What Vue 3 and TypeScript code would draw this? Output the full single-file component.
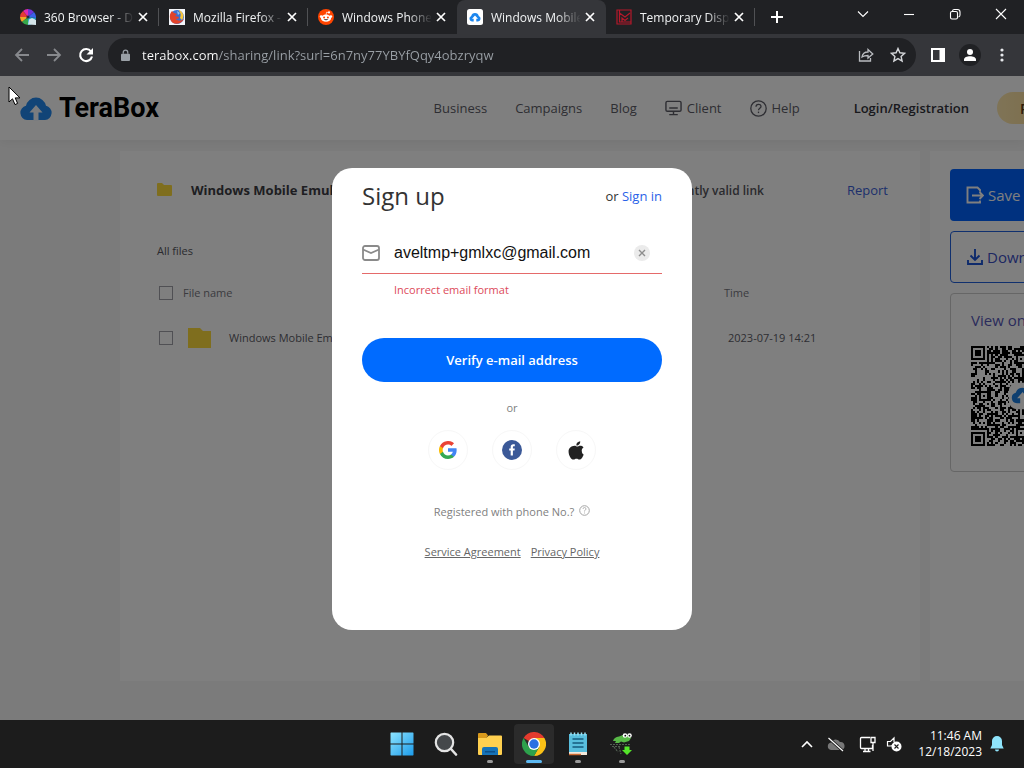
<script setup lang="ts">
import { ref } from 'vue'

interface Tab {
  title: string
  icon: string
  active?: boolean
}

const tabs: Tab[] = [
  { title: '360 Browser - D', icon: 'pinwheel' },
  { title: 'Mozilla Firefox -', icon: 'firefox' },
  { title: 'Windows Phone', icon: 'reddit' },
  { title: 'Windows Mobile', icon: 'terabox', active: true },
  { title: 'Temporary Disp', icon: 'mail' },
]

const url = ref('terabox.com/sharing/link?surl=6n7ny77YBYfQqy4obzryqw')
const email = ref('aveltmp+gmlxc@gmail.com')

const files = [{ name: 'Windows Mobile Emulators', time: '2023-07-19 14:21' }]

const size = 49

function finder(x: number, y: number, left: number, top: number): boolean | null {
  const dx = x - left
  const dy = y - top
  if (dx < -1 || dy < -1 || dx > 7 || dy > 7) return null
  const d = Math.max(Math.abs(dx - 3), Math.abs(dy - 3))
  return d !== 2 && d !== 4
}

function buildCode(): string {
  let seed = 20231
  let path = ''
  const marks = [6, 24, 42]
  for (let y = 0; y < size; y++) {
    for (let x = 0; x < size; x++) {
      seed = (seed * 1103515245 + 12345) % 2147483648
      let dark = (seed >> 16) % 100 < 51
      for (const my of marks) {
        for (const mx of marks) {
          const d = Math.max(Math.abs(x - mx), Math.abs(y - my))
          if (d < 3) dark = d !== 1
        }
      }
      const found = finder(x, y, 0, 0) ?? finder(x, y, size - 7, 0) ?? finder(x, y, 0, size - 7)
      if (found !== null) dark = found
      if (dark) path += `M${x} ${y}h1v1h-1z`
    }
  }
  return path
}

const codePath = buildCode()
</script>

<template>
  <div class="desktop">
    <div class="tabstrip">
      <div class="tabs" role="tablist">
        <div v-for="tab in tabs" :key="tab.title" class="tab" :class="{ active: tab.active }" role="tab">
          <svg v-if="tab.icon === 'pinwheel'" class="favicon" viewBox="0 0 16 16">
            <path d="M8 8V0a8 8 0 0 1 6 3z" fill="#6f35d8" />
            <path d="M8 8l6-5a8 8 0 0 1 2 6z" fill="#3a62e8" />
            <path d="M8 8L3 2a8 8 0 0 1 5-2z" fill="#e02ab0" />
            <path d="M8 8L0 8a8 8 0 0 1 3-6z" fill="#e53a35" />
            <path d="M8 8L2 13a8 8 0 0 1-2-5z" fill="#f2a826" />
            <path d="M8 8v8a8 8 0 0 1-6-3z" fill="#35a84a" />
            <path d="M8 8l8 1a8 8 0 0 1-8 7z" fill="#1ba4c9" />
            <circle cx="8" cy="8" r="1.6" fill="#2b2b3c" />
            <path d="M8 15.5l1-5 3-1.5 4 2v5z" fill="#d4e4e8" />
          </svg>
          <svg v-else-if="tab.icon === 'firefox'" class="favicon" viewBox="0 0 16 16">
            <path d="M0 0h16v16H0z" fill="#f3f5fa" />
            <circle cx="8" cy="8" r="7" fill="#3b6fd0" />
            <path d="M3 2C0 5 0 11 4 14c4 2 9 0 11-4-3 2-6 2-8 0 2 0 3-1 3-2L6 7l2-2-3-1z" fill="#e2432a" />
            <path d="M10 2c2 2 2 4 1 7l2 2c3-4 1-8-3-10z" fill="#f7c53b" />
            <path d="M8 2l3 2-2 2z" fill="#8fc4f0" />
          </svg>
          <svg v-else-if="tab.icon === 'reddit'" class="favicon" viewBox="0 0 16 16">
            <circle cx="8" cy="8" r="8" fill="#ff4500" />
            <ellipse cx="8" cy="9.2" rx="5" ry="3.6" fill="#fff" />
            <circle cx="3.2" cy="7.6" r="1.4" fill="#fff" />
            <circle cx="12.8" cy="7.6" r="1.4" fill="#fff" />
            <circle cx="11" cy="3.4" r="1.1" fill="#fff" />
            <path d="M8 6l.6-2.8 2.4.5" fill="none" stroke="#fff" stroke-width=".7" />
            <circle cx="6.1" cy="8.4" r="1" fill="#ff4500" />
            <circle cx="9.9" cy="8.4" r="1" fill="#ff4500" />
            <path d="M5.6 10.3q2.4 2 4.8 0z" fill="#222" />
          </svg>
          <svg v-else-if="tab.icon === 'terabox'" class="favicon" viewBox="0 0 16 16">
            <rect width="16" height="16" rx="2.5" fill="#fff" />
            <path d="M5 12.5a2.8 2.8 0 0 1-.8-5.4 3.9 3.9 0 0 1 7.6 0 2.8 2.8 0 0 1-.8 5.4H9.3V9.8H11L8 6.6 5 9.8h1.7v2.7z" fill="#1c86ee" />
          </svg>
          <svg v-else class="favicon" viewBox="0 0 16 16" fill="none" stroke="#b5182a">
            <path d="M1 1h14v14H1z" stroke-width="1.2" />
            <path d="M3.5 1v12H15M3.5 4L9 8l5-4M6 13V9l3 2.5L12 9" stroke-width="1.2" />
          </svg>
          <span class="tab-title">{{ tab.title }}</span>
          <button class="tab-close" aria-label="Close tab">
            <svg width="10" height="10" viewBox="0 0 10 10"><path d="M1 1l8 8M9 1L1 9" stroke="#fff" stroke-width="1.7" /></svg>
          </button>
        </div>
      </div>
      <button class="new-tab" aria-label="New tab">
        <svg width="14" height="14" viewBox="0 0 14 14"><path d="M7 1v12M1 7h12" stroke="#fff" stroke-width="2" /></svg>
      </button>
      <div class="window-controls">
        <button aria-label="Search tabs"><svg viewBox="0 0 12 12"><path d="M1 3.5l5 5 5-5" /></svg></button>
        <button aria-label="Minimize"><svg viewBox="0 0 12 12"><path d="M1 6.5h10" /></svg></button>
        <button aria-label="Restore">
          <svg viewBox="0 0 12 12"><rect x="1.5" y="3.5" width="7" height="7.5" rx="1.5" /><path d="M3.5 3.2V3q.2-1.5 1.8-1.5h3.2q2.5 0 2.5 2.5v3q0 1.5-1.5 2" /></svg>
        </button>
        <button aria-label="Close window"><svg viewBox="0 0 12 12"><path d="M1 1l10 10M11 1L1 11" /></svg></button>
      </div>
    </div>

    <div class="toolbar">
      <button class="tool" aria-label="Back">
        <svg width="16" height="16" viewBox="0 0 16 16" fill="none" stroke="#87898d" stroke-width="1.8"><path d="M15 8H2M8 2L2 8l6 6" /></svg>
      </button>
      <button class="tool" aria-label="Forward">
        <svg width="16" height="16" viewBox="0 0 16 16" fill="none" stroke="#87898d" stroke-width="1.8"><path d="M1 8h13M8 2l6 6-6 6" /></svg>
      </button>
      <button class="tool" aria-label="Reload">
        <svg width="16" height="16" viewBox="0 0 16 16"><path d="M13 4.5A6 6 0 1 0 14 9.5" fill="none" stroke="#fff" stroke-width="2.1" /><path d="M15 1v6.5H8.5z" fill="#fff" /></svg>
      </button>
      <div class="address">
        <svg class="lock" width="9" height="13" viewBox="0 0 10 14"><rect y="5" width="10" height="8" rx="1" fill="#9aa0a6" /><path d="M2.5 5V3.5a2.5 2.5 0 0 1 5 0V5" fill="none" stroke="#9aa0a6" stroke-width="1.4" /></svg>
        <input v-model="url" class="url" type="text" aria-label="Address" spellcheck="false" />
        <button class="tool" aria-label="Share">
          <svg width="16" height="16" viewBox="0 0 16 16" fill="none" stroke="#b9bcc0" stroke-width="1.3"><path d="M1.5 4v10h11v-3M4 10c.5-3.5 2.5-5 6-5V2.5L14.8 7 10 11V8.5C7 8.5 5.5 9 4 10z" /></svg>
        </button>
        <button class="tool" aria-label="Bookmark">
          <svg width="16" height="16" viewBox="0 0 16 16" fill="none" stroke="#d5d7da" stroke-width="1.4"><path d="M8 1.5l1.9 4.3 4.7.5-3.5 3.1 1 4.6L8 11.6 3.9 14l1-4.6L1.4 6.3l4.7-.5z" /></svg>
        </button>
      </div>
      <button class="tool" aria-label="Side panel">
        <svg width="14" height="14" viewBox="0 0 14 14"><path d="M1 1h12v12H1z" fill="none" stroke="#fff" stroke-width="2" /><path d="M8.5 1H13v12H8.5z" fill="#fff" /></svg>
      </button>
      <button class="tool" aria-label="Profile">
        <svg width="22" height="22" viewBox="0 0 22 22"><circle cx="11" cy="11" r="11" fill="#202124" /><circle cx="11" cy="8" r="3" fill="#fff" /><path d="M5 17v-1.5c0-4.5 12-4.5 12 0V17z" fill="#fff" /></svg>
      </button>
      <button class="tool" aria-label="Menu">
        <svg width="4" height="14" viewBox="0 0 4 14" fill="#e8eaed"><circle cx="2" cy="2" r="1.6" /><circle cx="2" cy="7" r="1.6" /><circle cx="2" cy="12" r="1.6" /></svg>
      </button>
    </div>

    <main class="page">
      <header class="site-header">
        <a class="brand" href="#">
          <svg width="32" height="26" viewBox="0 0 32 26"><path d="M7 25a7.2 7.2 0 0 1-1-14.2 10.2 10.2 0 0 1 20 0A7.2 7.2 0 0 1 25 25z" fill="#2389ee" /><path d="M16 10l-6.500 7.500h4V26h5v-8.500h4z" fill="#f4f9ff" /></svg>
          <span>TeraBox</span>
        </a>
        <nav class="site-nav">
          <a href="#">Business</a>
          <a href="#">Campaigns</a>
          <a href="#">Blog</a>
          <a href="#" class="with-icon">
            <svg width="17" height="16" viewBox="0 0 18 16" fill="none" stroke="#5c5c66" stroke-width="1.5"><rect x="1" y="1" width="16" height="10.5" rx="1.5" /><path d="M4.5 8h9M9 12v3M4.5 15h9" /></svg>
            Client
          </a>
          <a href="#" class="with-icon">
            <svg width="17" height="17" viewBox="0 0 17 17" fill="none" stroke="#5c5c66" stroke-width="1.3"><circle cx="8.5" cy="8.5" r="7.7" /><path d="M6 6.8c0-3.3 5-3.3 5-.3 0 1.8-2.5 1.8-2.5 3.8" /><path d="M8.5 11.6v1.5" /></svg>
            Help
          </a>
          <a href="#" class="login">Login/Registration</a>
          <button class="premium">Premium</button>
        </nav>
      </header>

      <div class="content">
        <section class="card">
          <div class="card-head">
            <svg width="15" height="14" viewBox="0 0 15 14"><path d="M0 1q0-1 1-1h4l2 2h7q1 0 1 1v9q0 1-1 1H1q-1 0-1-1z" fill="#ffdc3d" /></svg>
            <h2>Windows Mobile Emulators</h2>
            <strong>Permanently valid link</strong>
            <a href="#" class="report">Report</a>
          </div>
          <p class="crumb">All files</p>
          <table class="files">
            <thead>
              <tr>
                <th class="name">
                  <label><input type="checkbox" /><span>File name</span></label>
                </th>
                <th class="time">Time</th>
              </tr>
            </thead>
            <tbody>
              <tr v-for="file in files" :key="file.name">
                <td class="name">
                  <label>
                    <input type="checkbox" />
                    <svg width="23" height="20" viewBox="0 0 23 20"><path d="M0 0h12l3 3h8v17H0z" fill="#ffdc3d" /></svg>
                    <span>{{ file.name }}</span>
                  </label>
                </td>
                <td class="time">{{ file.time }}</td>
              </tr>
            </tbody>
          </table>
        </section>

        <aside class="side">
          <button class="side-btn primary">
            <svg width="18" height="18" viewBox="0 0 18 18" fill="none" stroke="#fff" stroke-width="1.9"><path d="M14 5.5V4l-2.5-2.5H1.5v15H14v-2M6 9.5h11M13.5 6l3.5 3.5-3.5 3.5" /></svg>
            Save to TeraBox
          </button>
          <button class="side-btn outline">
            <svg width="16" height="16" viewBox="0 0 16 16" fill="none" stroke="#1c55d8" stroke-width="1.9"><path d="M8 0v11M3.5 6.5L8 11l4.5-4.5M1 11v4h14v-4" /></svg>
            Download
          </button>
          <div class="scan">
            <p>View on phone</p>
            <svg class="code" width="100" height="100" :viewBox="`0 0 ${size} ${size}`">
              <path :d="codePath" fill="#000" shape-rendering="crispEdges" />
              <rect x="18.5" y="18" width="13" height="13" rx="4" fill="#fff" />
              <path d="M22.5 28a2.6 2.6 0 0 1-.6-5.1 3.6 3.6 0 0 1 6.8 0 2.6 2.6 0 0 1-.6 5.1h-1.6v-2.4H28l-2.7-3-2.7 3h1.5V28z" fill="#1d7fe0" />
            </svg>
          </div>
        </aside>
      </div>

      <div class="overlay">
        <form class="modal" @submit.prevent>
          <div class="modal-head">
            <h1>Sign up</h1>
            <span>or <a href="#">Sign in</a></span>
          </div>
          <div class="field">
            <svg width="18" height="16" viewBox="0 0 18 16" fill="none" stroke="#8a8a8a" stroke-width="1.8"><rect x="1" y="1" width="16" height="14" rx="2" /><path d="M1 4.5l8 3.5 8-3.5" /></svg>
            <input v-model="email" type="text" aria-label="Email" spellcheck="false" />
            <button type="button" class="clear" aria-label="Clear">
              <svg width="16" height="16" viewBox="0 0 16 16"><circle cx="8" cy="8" r="8" fill="#ebebeb" /><path d="M5 5l6 6M11 5l-6 6" stroke="#8e8e8e" stroke-width="1.4" /></svg>
            </button>
          </div>
          <p class="error">Incorrect email format</p>
          <button class="verify" type="submit">Verify e-mail address</button>
          <p class="or">or</p>
          <div class="socials">
            <button type="button" aria-label="Google">
              <svg width="18" height="18" viewBox="0 0 18 18"><path d="M17.64 9.2c0-.64-.06-1.25-.16-1.84H9v3.48h4.84a4.14 4.14 0 0 1-1.8 2.72v2.26h2.92c1.7-1.57 2.68-3.88 2.68-6.62z" fill="#4285f4" /><path d="M9 18c2.43 0 4.47-.8 5.96-2.18l-2.92-2.26c-.8.54-1.84.86-3.04.86-2.34 0-4.33-1.58-5.04-3.71H.96v2.33A9 9 0 0 0 9 18z" fill="#34a853" /><path d="M3.96 10.71a5.4 5.4 0 0 1 0-3.42V4.96H.96a9 9 0 0 0 0 8.08z" fill="#fbbc05" /><path d="M9 3.58c1.32 0 2.51.45 3.44 1.35l2.58-2.59A9 9 0 0 0 .96 4.96l3 2.33C4.67 5.16 6.66 3.58 9 3.58z" fill="#ea4335" /></svg>
            </button>
            <button type="button" aria-label="Facebook">
              <svg width="20" height="20" viewBox="0 0 20 20"><circle cx="10" cy="10" r="10" fill="#3b5998" /><path d="M8.7 15.5v-5H7.2V8.4h1.5V7c0-1.800 1-2.700 2.600-2.700h1.500v2h-1c-.7 0-.9.3-.9.9v1.2h1.9l-.3 2.1h-1.6v5z" fill="#fff" /></svg>
            </button>
            <button type="button" aria-label="Apple">
              <svg width="18" height="20" viewBox="0 0 18 21" fill="#222"><path d="M15 11.1c0-2.2 1.8-3.2 1.900-3.300-1-1.500-2.600-1.700-3.200-1.700-1.400-.1-2.700.8-3.300.8-.7 0-1.700-.8-2.900-.8C3.900 6.200 1.200 8.600 1.200 12c0 4.100 2.700 8.600 5.100 8.600 1.200 0 1.700-.8 3.200-.8s1.900.8 3.200.8c2.200 0 3.800-3.600 4.300-5.300-.1 0-2-1-2-4.200z" /><path d="M12.400 4.400c.7-.8 1.200-2 1-3.200-1 .1-2.200.7-2.900 1.500-.7.8-1.200 1.900-1.100 3.100 1.200.1 2.300-.6 3-1.400z" /></svg>
            </button>
          </div>
          <p class="phone">
            Registered with phone No.?
            <svg width="11" height="11" viewBox="0 0 11 11" fill="none" stroke="#a5a5a5"><circle cx="5.5" cy="5.5" r="4.8" /><path d="M4 4q0-1.5 1.5-1.5T7 4q0 1-1.5 1.7v.8M5.5 7.5v1" stroke-width=".8" /></svg>
          </p>
          <p class="legal"><a href="#">Service Agreement</a><a href="#">Privacy Policy</a></p>
        </form>
      </div>

      <svg class="pointer" width="13" height="20" viewBox="0 0 13 20"><path d="M1 1v15l3.5-3.2L7 18.6l2.6-1.2L7.2 11.9H12z" fill="#fff" stroke="#000" /></svg>
    </main>

    <footer class="taskbar">
      <div class="apps">
        <button aria-label="Start">
          <svg width="24" height="24" viewBox="0 0 24 24"><defs><linearGradient id="start" x1="0" y1="0" x2="1" y2="1"><stop offset="0" stop-color="#8de4ff" /><stop offset="1" stop-color="#1c9bea" /></linearGradient></defs><path d="M1 .5h10.500V11.500H.5V1zM12.500.5H23l.5.5v10.500h-11zM.5 12.500h11v11H1l-.5-.5zM12.500 12.500h11V23l-.5.5H12.500z" fill="url(#start)" /></svg>
        </button>
        <button aria-label="Search">
          <svg width="24" height="24" viewBox="0 0 24 24"><circle cx="10.5" cy="10.5" r="8.7" fill="#45484b" stroke="#e4e4e4" stroke-width="2.2" /><path d="M17 17l5 5.5" stroke="#e4e4e4" stroke-width="2.6" stroke-linecap="round" /></svg>
        </button>
        <button aria-label="Files" class="running">
          <svg width="24" height="24" viewBox="0 0 24 24"><path d="M0 2q0-1 1-1h7l2 2.5-2 3H0z" fill="#d99a1c" /><path d="M0 6h8l3-2.5h12q1 0 1 1V22q0 1-1 1H1q-1 0-1-1z" fill="#ffd04f" /><path d="M4 23v-6q0-2 2-2h12q2 0 2 2v6z" fill="#1673b8" /><path d="M7 19h10v1.5H7z" fill="#0d5089" /></svg>
        </button>
        <button aria-label="Chrome" class="running current">
          <svg width="24" height="24" viewBox="0 0 24 24"><path d="M12 12L1.6 6A12 12 0 0 1 22.4 6z" fill="#e33b2e" /><path d="M12 6h10.4A12 12 0 0 1 12 24l5.2-9z" fill="#fbc116" /><path d="M6.8 15L1.6 6A12 12 0 0 0 12 24l5.2-9z" fill="#2da24c" /><circle cx="12" cy="12" r="6" fill="#fff" /><circle cx="12" cy="12" r="4.7" fill="#2c70e2" /></svg>
        </button>
        <button aria-label="Notepad" class="running">
          <svg width="20" height="24" viewBox="0 0 20 24"><path d="M1 2h18v19H1z" fill="#58bedd" /><path d="M1 20h18v2.5q0 .5-.5.5h-17q-.5 0-.5-.5z" fill="#f3e9dc" /><path d="M1 22.5h12" stroke="#cf6b32" stroke-width="1.5" /><path d="M4.5 7h11M4.5 11h11M4.5 15h11" stroke="#145b7e" stroke-width="1.7" /><path d="M3 .5v3M6.5.5v3M10 .5v3M13.5.5v3M17 .5v3" stroke="#9de2f5" stroke-width="1.5" /></svg>
        </button>
        <button aria-label="Downloader" class="running">
          <svg width="24" height="24" viewBox="0 0 24 24"><path d="M3 9q1-4 6-4.500l4-1.500h6l2 3-2 3-5 1.500-3-1-2 1.500H5l1-2z" fill="#58b947" /><circle cx="15" cy="3.5" r="2.3" fill="#fff" /><circle cx="19.5" cy="3.5" r="2.3" fill="#fff" /><circle cx="15.3" cy="3.7" r=".9" fill="#111" /><circle cx="19.5" cy="3.7" r=".9" fill="#111" /><path d="M0 12.5h21M2 14.5h9M4 15l4 5M9 15l2 7" stroke="#526052" stroke-width="1.2" stroke-dasharray="2 1" /><path d="M14.5 14.5h5v3.5h2.5l-5 5-5-5h2.5z" fill="#55e52a" /></svg>
        </button>
      </div>
      <div class="tray">
        <button aria-label="Hidden icons"><svg width="12" height="8" viewBox="0 0 12 8" fill="none" stroke="#fff" stroke-width="1.6"><path d="M1 7l5-5 5 5" /></svg></button>
        <button aria-label="Cloud storage"><svg width="18" height="15" viewBox="0 0 18 15"><path d="M4 13a3.8 3.8 0 0 1 0-7.5 5 5 0 0 1 9-.5 4 4 0 0 1 1 8z" fill="#777" /><path d="M1.5 1l14.5 13" stroke="#1c1c1c" stroke-width="3" /><path d="M1.5 1l14.5 13" stroke="#fff" stroke-width="1.2" /></svg></button>
        <button aria-label="Network"><svg width="18" height="17" viewBox="0 0 18 17" fill="none" stroke="#fff" stroke-width="1.3"><path d="M11 1.5H2.5q-1 0-1 1v9q0 1 1 1h11V9M12 1.5h4v5h-4zM14 6.5V15M4 15.5h7.5M6 12.5v3M9.5 12.5v3" /></svg></button>
        <button aria-label="Volume"><svg width="16" height="16" viewBox="0 0 16 16"><path d="M7 9.5L4.5 10H1.5V5.5h3L8 2v4" fill="none" stroke="#fff" stroke-width="1.2" /><circle cx="10.5" cy="10.5" r="5" fill="#fff" /><path d="M8.5 8.5l4 4M12.5 8.5l-4 4" stroke="#1c1c1c" stroke-width="1.1" /></svg></button>
        <div class="clock"><span>11:46 AM</span><span>12/18/2023</span></div>
        <button aria-label="Notifications"><svg width="14" height="16" viewBox="0 0 14 16" fill="#8fe4fb"><path d="M7 0a5 5 0 0 0-5 5v4L.3 12.5h13.4L12 9V5a5 5 0 0 0-5-5zM5 13.5h4a2 2 0 0 1-4 0z" /></svg></button>
      </div>
    </footer>
  </div>
</template>

<style>
body {
  margin: 0;
}
</style>

<style scoped>
.desktop {
  display: flex;
  flex-direction: column;
  height: 100vh;
  overflow: hidden;
  font-family: 'Open Sans', 'Noto Sans', sans-serif;
  font-size: 11px;
}

.desktop * {
  box-sizing: border-box;
}

button {
  display: flex;
  align-items: center;
  justify-content: center;
  flex: none;
  margin: 0;
  padding: 0;
  border: 0;
  background: none;
  font-family: inherit;
}

svg {
  flex: none;
}

a {
  color: inherit;
  text-decoration: none;
}

p,
h1,
h2 {
  margin: 0;
}

input {
  outline: 0;
}

.tabstrip {
  display: flex;
  flex: none;
  height: 34px;
  padding-left: 10px;
  background: #202124;
}

.tabs {
  display: flex;
  min-width: 0;
}

.tab {
  display: flex;
  align-items: center;
  width: 149px;
  padding: 0 10px;
  color: #f1f3f4;
  font-size: 12px;
  background: linear-gradient(#505154, #505154) right center / 1px 18px no-repeat;
}

.tab:has(+ .active) {
  background: none;
}

.tab.active {
  border-radius: 8px 8px 0 0;
  background: #35363a;
}

.favicon {
  width: 16px;
  height: 16px;
}

.tab-title {
  flex: 1;
  min-width: 0;
  margin: 0 4px 0 8px;
  white-space: nowrap;
  mask-image: linear-gradient(90deg, #000 66px, transparent 90px);
}

.tab-close {
  width: 12px;
  height: 16px;
}

.new-tab {
  width: 28px;
  margin-left: 8px;
}

.window-controls {
  display: flex;
  height: 28px;
  margin-left: auto;
}

.window-controls button {
  width: 46px;
}

.window-controls svg {
  width: 12px;
  height: 12px;
  fill: none;
  stroke: #fff;
  stroke-width: 1.1;
}

.toolbar {
  display: flex;
  align-items: center;
  flex: none;
  height: 42px;
  padding: 0 6px;
  background: #35363a;
}

.tool {
  width: 32px;
  height: 32px;
}

.address {
  display: flex;
  align-items: center;
  flex: 1;
  height: 34px;
  margin: 0 6px;
  padding: 0 2px 0 13px;
  border-radius: 17px;
  background: #202124;
}

.url {
  flex: 1;
  min-width: 0;
  margin-left: 12px;
  padding: 0;
  border: 0;
  color: transparent;
  background: linear-gradient(90deg, #fff 76px, #9aa0a6 76px);
  background-clip: text;
  font: 13px 'Open Sans', sans-serif;
}

.page {
  position: relative;
  flex: 1;
  min-height: 0;
  overflow: hidden;
  background: #f7f7f7;
}

.site-header {
  display: flex;
  align-items: center;
  height: 64px;
  padding-left: 20px;
  background: #fff;
  box-shadow: 0 2px 10px rgba(0, 0, 0, 0.06);
}

.brand {
  display: flex;
  align-items: center;
  gap: 7px;
  color: #000;
  font: 700 27px Roboto, sans-serif;
}

.site-nav {
  display: flex;
  align-items: center;
  margin-left: auto;
  gap: 28px;
  color: #5c5c66;
  font-size: 13px;
  white-space: nowrap;
}

.with-icon {
  display: flex;
  align-items: center;
  gap: 5px;
}

.login {
  margin-left: 26px;
  color: #33333a;
  font-weight: 600;
}

.premium {
  width: 108px;
  height: 32px;
  margin-right: -81px;
  border-radius: 16px;
  background: linear-gradient(90deg, #ffe8ae, #f2cc79);
  color: #5a3a10;
  font-size: 14px;
  font-weight: 600;
}

.content {
  display: flex;
  gap: 10px;
  height: 530px;
  margin: 11px 0 0 120px;
}

.card {
  flex: 1;
  min-width: 0;
  padding: 29px 32px 0 37px;
  background: #fff;
}

.card-head {
  display: flex;
  align-items: center;
  height: 20px;
}

.card-head h2 {
  margin-left: 19px;
  color: #3c3c44;
  font-size: 13px;
  font-weight: 700;
}

.card-head strong {
  margin-left: auto;
  color: #55555c;
  font-size: 12px;
  font-weight: 600;
}

.report {
  margin-left: 83px;
  color: #3a5fd9;
  font-size: 13px;
}

.crumb {
  margin-top: 41px;
  color: #55555c;
  line-height: 20px;
}

.files {
  width: 100%;
  margin-top: 9px;
  border-collapse: collapse;
  table-layout: fixed;
}

.files th,
.files td {
  height: 45px;
  padding: 0;
  text-align: left;
  font-weight: 400;
  color: #5c5c66;
}

.files th {
  color: #77777f;
}

.files .time {
  width: 164px;
}

.files td.time {
  padding-left: 4px;
}

.files label {
  display: flex;
  align-items: center;
}

.files input {
  appearance: none;
  width: 14px;
  height: 14px;
  margin: 0 10px 0 2px;
  border: 1px solid #a0a0a8;
}

.files td input {
  margin-right: 15px;
}

.files td span {
  margin-left: 18px;
}

.side {
  flex: 0 0 94px;
  min-width: 0;
  padding: 18px 0 0 20px;
  background: #fff;
}

.side-btn {
  justify-content: flex-start;
  gap: 4px;
  width: 240px;
  height: 52px;
  padding-left: 16px;
  border-radius: 4px;
  font-size: 15px;
}

.primary {
  background: #0062ff;
  color: #fff;
}

.outline {
  margin-top: 10px;
  border: 1px solid #2060dd;
  color: #3c4fc5;
}

.scan {
  width: 240px;
  height: 179px;
  margin-top: 10px;
  padding: 16px 20px;
  border: 1px solid #ccc;
  border-radius: 4px;
  color: #5557b8;
  font-size: 15px;
  line-height: 20px;
}

.code {
  display: block;
  margin-top: 16px;
}

.overlay {
  position: absolute;
  inset: 0;
  display: flex;
  align-items: center;
  justify-content: center;
  padding-top: 2px;
  background: rgba(0, 0, 0, 0.5);
}

.modal {
  width: 360px;
  padding: 12px 30px 68px;
  border-radius: 20px;
  background: #fff;
  text-align: center;
  line-height: 20px;
}

.modal-head {
  display: flex;
  align-items: center;
  justify-content: space-between;
  height: 32px;
  color: #333;
  font-size: 13px;
}

.modal-head h1 {
  font-size: 24px;
  font-weight: 500;
}

.modal-head a {
  color: #2a62e8;
}

.field {
  display: flex;
  align-items: center;
  height: 42px;
  margin-top: 20px;
  padding-right: 12px;
  border-bottom: 1px solid #e56a6a;
}

.field input {
  flex: 1;
  min-width: 0;
  margin-left: 14px;
  padding: 0;
  border: 0;
  background: none;
  color: #111;
  font: 16px 'Liberation Sans', sans-serif;
}

.error {
  margin: 6px 0 0 32px;
  color: #dd4a5a;
  text-align: left;
}

.verify {
  width: 100%;
  height: 44px;
  margin-top: 38px;
  border-radius: 22px;
  background: #006bff;
  color: #fff;
  font-size: 13px;
  font-weight: 600;
}

.or {
  margin-top: 16px;
  color: #808080;
}

.socials {
  display: flex;
  justify-content: center;
  gap: 24px;
  margin-top: 12px;
}

.socials button {
  width: 40px;
  height: 40px;
  border: 1px solid #f7f7f7;
  border-radius: 50%;
}

.phone {
  display: flex;
  justify-content: center;
  gap: 5px;
  margin-top: 32px;
  color: #808080;
}

.phone svg {
  margin-top: 3px;
}

.legal {
  display: flex;
  justify-content: center;
  gap: 10px;
  margin-top: 20px;
  color: #666;
}

.legal a {
  text-decoration: underline;
}

.pointer {
  position: absolute;
  top: 10px;
  left: 8px;
}

.taskbar {
  display: grid;
  grid-template-columns: 1fr auto 1fr;
  flex: none;
  height: 48px;
  background: #1c1c1c;
}

.apps {
  display: flex;
  grid-column: 2;
  align-items: center;
  gap: 4px;
}

.apps button {
  position: relative;
  width: 40px;
  height: 40px;
  border-radius: 4px;
}

.running::after {
  position: absolute;
  bottom: 1px;
  width: 6px;
  height: 3px;
  border-radius: 2px;
  background: #9a9a9a;
  content: '';
}

.current {
  background: #2b2b2b;
}

.current::after {
  width: 16px;
  background: #5db9f2;
}

.tray {
  display: flex;
  align-items: center;
  justify-content: flex-end;
  padding-right: 20px;
}

.tray button {
  height: 32px;
}

.tray > button + button {
  margin-left: 14px;
}

.tray > button:nth-of-type(4) {
  margin-left: 9px;
}

.clock {
  display: flex;
  flex-direction: column;
  margin: 0 8px 0 16px;
  color: #fff;
  font-size: 12px;
  line-height: 16px;
  text-align: right;
}
</style>
